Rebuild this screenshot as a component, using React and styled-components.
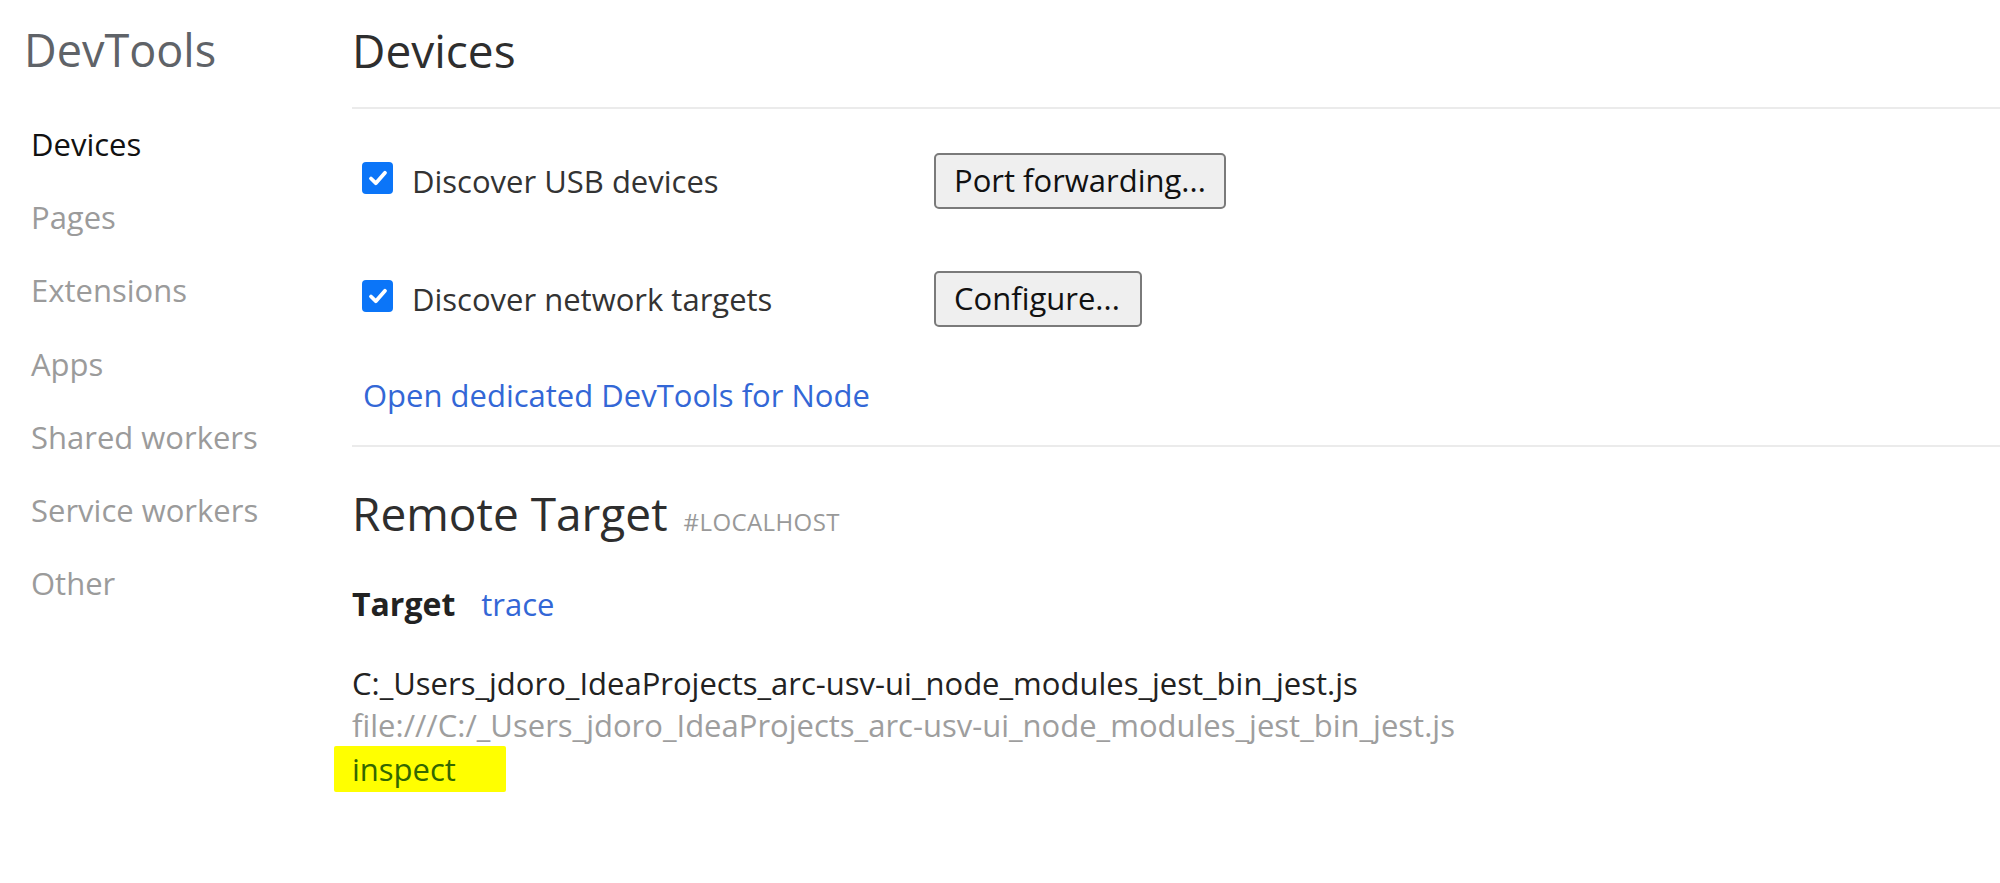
import React from 'react';
import styled, { createGlobalStyle } from 'styled-components';

const GlobalStyle = createGlobalStyle`
  html, body {
    margin: 0;
    padding: 0;
    background: #ffffff;
  }
  body {
    font-family: "Open Sans", "Noto Sans", sans-serif;
    color: #333333;
  }
`;

const sideItems = ['Devices', 'Pages', 'Extensions', 'Apps', 'Shared workers', 'Service workers', 'Other'];

const Check = () => (
    <CheckBox>
        <svg width="22" height="22" viewBox="0 0 22 22">
            <path d="M4 11.5 L8.8 16.2 L18 5.8" fill="none" stroke="#fff" strokeWidth="3.8" strokeLinecap="round" strokeLinejoin="round" />
        </svg>
    </CheckBox>
);

const App = () => {
    return (
        <Page>
            <GlobalStyle />
            <Sidebar>
                <Brand>DevTools</Brand>
                <Nav>
                    {sideItems.map((item, i) => (
                        <NavItem key={item} active={i === 0}>{item}</NavItem>
                    ))}
                </Nav>
            </Sidebar>
            <Main>
                <Heading>Devices</Heading>
                <Divider />
                <OptionRow>
                    <OptionLabel>
                        <Check />
                        <LabelText>Discover USB devices</LabelText>
                    </OptionLabel>
                    <Button width="292px">Port forwarding...</Button>
                </OptionRow>
                <OptionRow second>
                    <OptionLabel>
                        <Check />
                        <LabelText>Discover network targets</LabelText>
                    </OptionLabel>
                    <Button width="208px">Configure...</Button>
                </OptionRow>
                <NodeLink>Open dedicated DevTools for Node</NodeLink>
                <Divider bottom />
                <Heading remote>
                    Remote Target<Host>#LOCALHOST</Host>
                </Heading>
                <TargetRow>
                    <TargetName>Target</TargetName>
                    <Action>trace</Action>
                </TargetRow>
                <TargetBlock>
                    <TargetTitle>C:_Users_jdoro_IdeaProjects_arc-usv-ui_node_modules_jest_bin_jest.js</TargetTitle>
                    <TargetUrl>file:///C:/_Users_jdoro_IdeaProjects_arc-usv-ui_node_modules_jest_bin_jest.js</TargetUrl>
                    <Inspect>inspect</Inspect>
                </TargetBlock>
            </Main>
        </Page>
    );
};

export default App;

const Page = styled.div`
    display: flex;
    min-height: 883px;
    background: #fff;
`;

const Sidebar = styled.div`
    width: 352px;
    flex-shrink: 0;
    padding-top: 20px;
`;

const Brand = styled.div`
    font-size: 45px;
    line-height: 60px;
    color: #5f6368;
    padding-left: 24px;
`;

const Nav = styled.div`
    margin-top: 28px;
    display: flex;
    flex-direction: column;
`;

const NavItem = styled.div`
    font-size: 31px;
    line-height: 73.2px;
    padding-left: 31px;
    color: ${props => props.active ? '#111111' : '#9b9b9b'};
`;

const Main = styled.div`
    flex: 1;
    padding-top: 20px;
`;

const Heading = styled.div`
    font-size: 46px;
    line-height: 60px;
    color: #2e2e2e;
    margin-top: ${props => props.remote ? '36px' : '0'};
`;

const Host = styled.span`
    font-size: 24px;
    color: #999;
    margin-left: 16px;
    letter-spacing: 0.4px;
`;

const Divider = styled.div`
    height: 2px;
    background: #ebebeb;
    margin-top: ${props => props.bottom ? '30px' : '27px'};
`;

const OptionRow = styled.div`
    display: flex;
    align-items: center;
    height: 56px;
    margin-top: ${props => props.second ? '62px' : '44px'};
`;

const OptionLabel = styled.div`
    width: 582px;
    display: flex;
    align-items: center;
`;

const CheckBox = styled.span`
    width: 31px;
    height: 32px;
    margin-left: 10px;
    margin-top: -6px;
    border-radius: 4px;
    background: #0b75f8;
    display: flex;
    align-items: center;
    justify-content: center;
`;

const LabelText = styled.span`
    font-size: 31px;
    margin-left: 19px;
    color: #333;
`;

const Button = styled.div`
    width: ${props => props.width};
    height: 56px;
    box-sizing: border-box;
    border: 2px solid #7a7a7a;
    border-radius: 5px;
    background: #efefef;
    font-size: 31px;
    color: #111;
    padding-left: 18px;
    display: flex;
    align-items: center;
    padding-bottom: 2px;
`;

const NodeLink = styled.div`
    font-size: 31px;
    line-height: 40px;
    color: #3367d6;
    margin-top: 48px;
    padding-left: 11px;
`;

const TargetRow = styled.div`
    display: flex;
    align-items: baseline;
    margin-top: 32px;
    line-height: 40px;
`;

const TargetName = styled.span`
    font-size: 32px;
    font-weight: 700;
    color: #222;
`;

const Action = styled.span`
    font-size: 31px;
    color: #3367d6;
    margin-left: 26px;
`;

const TargetBlock = styled.div`
    margin-top: 38px;
    display: flex;
    flex-direction: column;
    align-items: flex-start;
    font-size: 31px;
    line-height: 42px;
`;

const TargetTitle = styled.div`
    color: #222;
`;

const TargetUrl = styled.div`
    color: #9e9e9e;
`;

const Inspect = styled.div`
    color: #336700;
    background: #ffff00;
    margin-left: -18px;
    padding: 2px 50px 2px 18px;
    line-height: 42px;
    border-radius: 2px;
`;
